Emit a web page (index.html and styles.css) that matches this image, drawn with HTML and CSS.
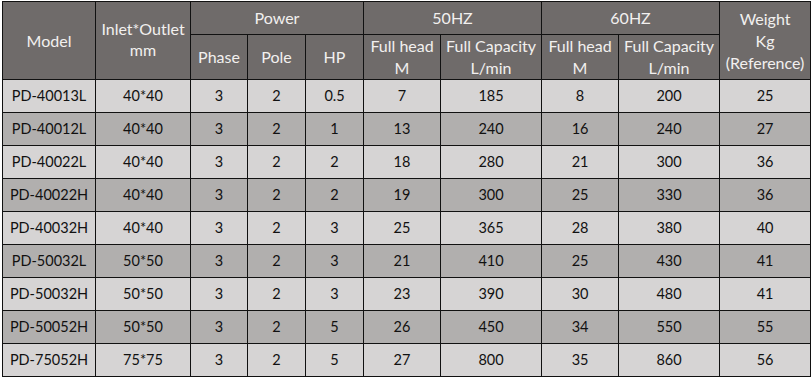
FILE: index.html
```html
<!DOCTYPE html>
<html>
<head>
<meta charset="utf-8">
<link rel="stylesheet" href="styles.css">
</head>
<body>
<table class="spec">
  <colgroup>
    <col class="c-model"><col class="c-inlet"><col class="c-phase"><col class="c-pole"><col class="c-hp">
    <col class="c-head"><col class="c-cap"><col class="c-head"><col class="c-cap"><col class="c-weight">
  </colgroup>
  <thead>
    <tr class="h1">
      <th rowspan="2">Model</th>
      <th rowspan="2" class="up">Inlet*Outlet<br>mm</th>
      <th colspan="3">Power</th>
      <th colspan="2">50HZ</th>
      <th colspan="2">60HZ</th>
      <th rowspan="2" class="weight">Weight<br>Kg<br>(Reference)</th>
    </tr>
    <tr class="h2">
      <th>Phase</th><th>Pole</th><th>HP</th>
      <th>Full head<br>M</th><th>Full Capacity<br>L/min</th>
      <th>Full head<br>M</th><th>Full Capacity<br>L/min</th>
    </tr>
  </thead>
  <tbody>
    <tr><td>PD-40013L</td><td>40*40</td><td>3</td><td>2</td><td>0.5</td><td>7</td><td>185</td><td>8</td><td>200</td><td>25</td></tr>
    <tr><td>PD-40012L</td><td>40*40</td><td>3</td><td>2</td><td>1</td><td>13</td><td>240</td><td>16</td><td>240</td><td>27</td></tr>
    <tr><td>PD-40022L</td><td>40*40</td><td>3</td><td>2</td><td>2</td><td>18</td><td>280</td><td>21</td><td>300</td><td>36</td></tr>
    <tr><td>PD-40022H</td><td>40*40</td><td>3</td><td>2</td><td>2</td><td>19</td><td>300</td><td>25</td><td>330</td><td>36</td></tr>
    <tr><td>PD-40032H</td><td>40*40</td><td>3</td><td>2</td><td>3</td><td>25</td><td>365</td><td>28</td><td>380</td><td>40</td></tr>
    <tr><td>PD-50032L</td><td>50*50</td><td>3</td><td>2</td><td>3</td><td>21</td><td>410</td><td>25</td><td>430</td><td>41</td></tr>
    <tr><td>PD-50032H</td><td>50*50</td><td>3</td><td>2</td><td>3</td><td>23</td><td>390</td><td>30</td><td>480</td><td>41</td></tr>
    <tr><td>PD-50052H</td><td>50*50</td><td>3</td><td>2</td><td>5</td><td>26</td><td>450</td><td>34</td><td>550</td><td>55</td></tr>
    <tr><td>PD-75052H</td><td>75*75</td><td>3</td><td>2</td><td>5</td><td>27</td><td>800</td><td>35</td><td>860</td><td>56</td></tr>
  </tbody>
</table>
</body>
</html>
```

FILE: styles.css
```css
html, body {
  margin: 0;
  padding: 0;
  background: #ffffff;
}
body {
  padding: 1px 0 0 2px;
}
.spec {
  border-collapse: collapse;
  table-layout: fixed;
  width: 808px;
  font-family: Lato, "Open Sans", sans-serif;
  font-size: 14.5px;
  color: #111111;
}
.c-model { width: 93px; }
.c-inlet { width: 95px; }
.c-phase { width: 57px; }
.c-pole { width: 58px; }
.c-hp { width: 58px; }
.c-head { width: 77px; }
.c-cap { width: 101px; }
.c-weight { width: 91px; }

.spec th, .spec td {
  border: 1px solid #111111;
  padding: 0;
  text-align: center;
  vertical-align: middle;
  white-space: nowrap;
  overflow: hidden;
}
.spec th {
  background: #6f6b6a;
  color: #f2f0ef;
  font-weight: normal;
  font-size: 16px;
  line-height: 22px;
}
.h1 th { height: 32px; }
.h2 th { height: 44px; }
.spec th.up { padding-bottom: 4px; line-height: 21px; }
.spec th.weight { line-height: 22px; }
.spec td {
  height: 32px;
  line-height: 20px;
  background: #d6d4d4;
}
.spec tbody tr:nth-child(even) td {
  background: #b1afae;
}
```
